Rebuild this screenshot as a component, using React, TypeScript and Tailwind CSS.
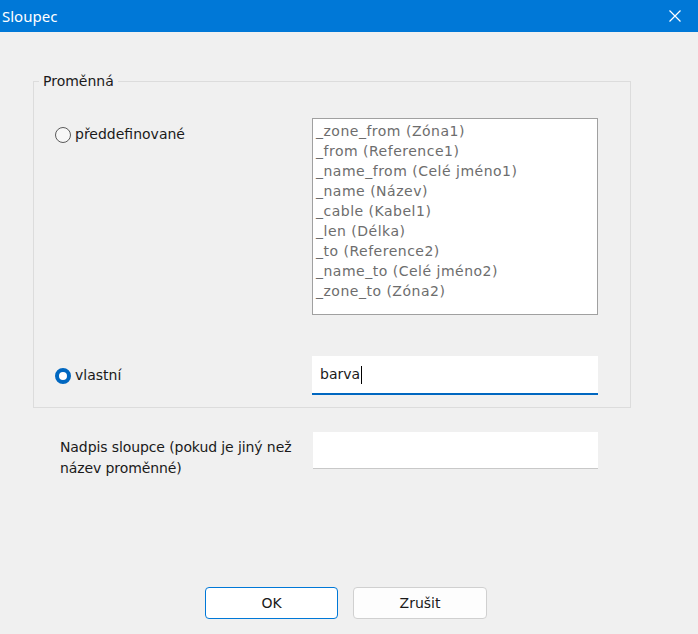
import React from 'react';

const items = [
  '_zone_from (Zóna1)',
  '_from (Reference1)',
  '_name_from (Celé jméno1)',
  '_name (Název)',
  '_cable (Kabel1)',
  '_len (Délka)',
  '_to (Reference2)',
  '_name_to (Celé jméno2)',
  '_zone_to (Zóna2)',
];

const RadioOff = () => (
  <span className="inline-block w-[16px] h-[16px] rounded-full border border-[#5a5a5a] bg-[#f7f7f7] shrink-0" />
);

const RadioOn = () => (
  <span className="inline-block w-[16px] h-[16px] rounded-full border-[4px] border-[#0067c0] bg-white shrink-0" />
);

const TitleBar = () => (
  <div className="h-[32px] bg-[#0078d7] flex items-center justify-between text-white">
    <span className="pl-[2px] text-[15px] font-['Noto_Sans',sans-serif]">Sloupec</span>
    <svg width="12" height="12" viewBox="0 0 12 12" className="mr-[17px]">
      <path d="M0.5 0.5 L11.5 11.5 M11.5 0.5 L0.5 11.5" stroke="white" strokeWidth="1.2" />
    </svg>
  </div>
);

export default function App() {
  return (
    <div className="w-[698px] h-[634px] bg-[#f0f0f0] flex flex-col font-['DejaVu_Sans',sans-serif] text-[14px] text-[#1a1a1a] overflow-hidden">
      <TitleBar />

      <div className="pl-[33px] pt-[40px]">
        <fieldset className="w-[598px] border border-[#dcdcdc] pl-[21px] pb-[12px]">
          <legend className="ml-[-16px] px-[4px] leading-[18px]">Proměnná</legend>
          <div className="grid grid-cols-[257px_286px] items-start pt-[28px]">
            <label className="flex items-center gap-[4px] mt-[6px]">
              <RadioOff />
              předdefinované
            </label>
            <div className="h-[197px] bg-white border border-[#a0a0a0] px-[3px] pt-[2px] text-[#6d6d6d] leading-[20px] tracking-[0.5px]">
              {items.map((it) => (
                <div key={it}>{it}</div>
              ))}
            </div>

            <label className="flex items-center gap-[4px] self-center mt-[41px]">
              <RadioOn />
              vlastní
            </label>
            <div className="mt-[41px] h-[39px] bg-white border-b-2 border-[#0067c0] flex items-center pl-[8px]">
              barva<span className="inline-block w-[1px] h-[18px] bg-black ml-[1px]" />
            </div>
          </div>
        </fieldset>

        <div className="grid grid-cols-[253px_285px] items-start pl-[27px] mt-[24px]">
          <p className="mt-[5px] leading-[21px] tracking-[-0.1px]">
            Nadpis sloupce (pokud je jiný než název proměnné)
          </p>
          <div className="h-[37px] bg-white border-b border-[#c8c8c8]" />
        </div>
      </div>

      <div className="mt-auto mb-[15px] pl-[205px] flex gap-[15px]">
        <button className="w-[133px] h-[32px] bg-white border border-[#0078d7] rounded-[4px] text-[14px]">OK</button>
        <button className="w-[134px] h-[32px] bg-[#fdfdfd] border border-[#d0d0d0] rounded-[4px] text-[14px]">Zrušit</button>
      </div>
    </div>
  );
}
